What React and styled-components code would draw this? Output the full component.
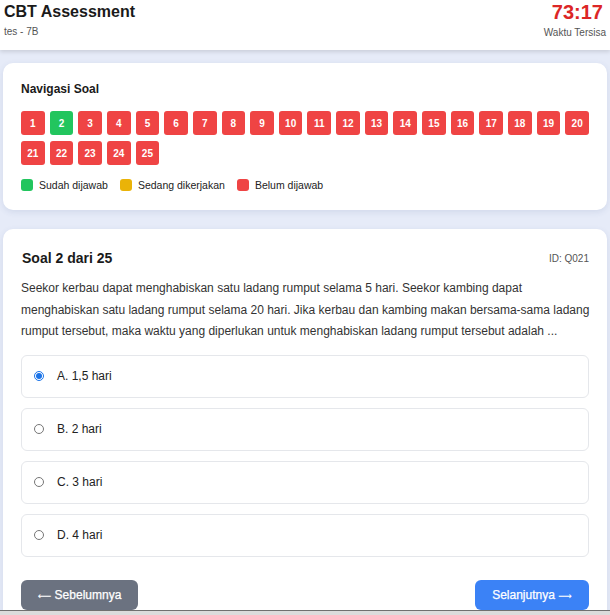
import React, { useState } from "react";
import styled, { createGlobalStyle } from "styled-components";

const GlobalStyle = createGlobalStyle`
  body {
    margin: 0;
    background: #e6ebf8;
    font-family: "Liberation Sans", Arial, sans-serif;
    color: #222;
  }
`;

const TOTAL = 25;
const CURRENT = 2;

const question = {
  id: "Q021",
  text:
    "Seekor kerbau dapat menghabiskan satu ladang rumput selama 5 hari. Seekor kambing dapat menghabiskan satu ladang rumput selama 20 hari. Jika kerbau dan kambing makan bersama-sama ladang rumput tersebut, maka waktu yang diperlukan untuk menghabiskan ladang rumput tersebut adalah ...",
  options: ["A. 1,5 hari", "B. 2 hari", "C. 3 hari", "D. 4 hari"],
};

const statusColor = {
  done: "#22c55e",
  active: "#eab308",
  todo: "#ef4444",
};

const App = () => {
  const [selected, setSelected] = useState(0);
  const answered = [2];

  return (
    <Page>
      <GlobalStyle />
      <Header>
        <div>
          <AppTitle>CBT Assessment</AppTitle>
          <SubText>tes - 7B</SubText>
        </div>
        <TimerBox>
          <Timer>73:17</Timer>
          <SubText>Waktu Tersisa</SubText>
        </TimerBox>
      </Header>

      <Main>
        <Card>
          <NavTitle>Navigasi Soal</NavTitle>
          <NumberGrid>
            {Array.from({ length: TOTAL }, (_, i) => i + 1).map((n) => (
              <NumberButton
                key={n}
                $status={answered.includes(n) ? "done" : "todo"}
              >
                {n}
              </NumberButton>
            ))}
          </NumberGrid>
          <Legend>
            <LegendItem>
              <Swatch $status="done" />
              Sudah dijawab
            </LegendItem>
            <LegendItem>
              <Swatch $status="active" />
              Sedang dikerjakan
            </LegendItem>
            <LegendItem>
              <Swatch $status="todo" />
              Belum dijawab
            </LegendItem>
          </Legend>
        </Card>

        <Card $question>
          <QuestionHead>
            <QuestionTitle>
              Soal {CURRENT} dari {TOTAL}
            </QuestionTitle>
            <QuestionId>ID: {question.id}</QuestionId>
          </QuestionHead>
          <QuestionText>{question.text}</QuestionText>
          <Options>
            {question.options.map((opt, i) => (
              <Option key={opt}>
                <Radio
                  type="radio"
                  name="answer"
                  checked={selected === i}
                  onChange={() => setSelected(i)}
                />
                {opt}
              </Option>
            ))}
          </Options>
          <Actions>
            <NavButton $variant="prev">
              <Arrow>⟵</Arrow> Sebelumnya
            </NavButton>
            <NavButton $variant="next">
              Selanjutnya <Arrow>⟶</Arrow>
            </NavButton>
          </Actions>
        </Card>
      </Main>
      <BottomEdge />
    </Page>
  );
};

const Page = styled.div`
  min-height: 100vh;
`;

const Header = styled.header`
  display: flex;
  justify-content: space-between;
  align-items: flex-start;
  height: 50px;
  box-sizing: border-box;
  padding: 2px 4px 0 4px;
  background: #fff;
  box-shadow: 0 2px 4px rgba(0, 0, 0, 0.12);
`;

const AppTitle = styled.h1`
  margin: 0;
  font-size: 16px;
  line-height: 19px;
  font-weight: 700;
  color: #1a1a1a;
`;

const SubText = styled.div`
  margin-top: 5px;
  font-size: 10px;
  color: #555;
`;

const TimerBox = styled.div`
  text-align: right;
`;

const Timer = styled.div`
  font-size: 20px;
  line-height: 20px;
  font-weight: 700;
  color: #dc2626;
  padding-right: 3px;
`;

const Main = styled.main`
  display: flex;
  flex-direction: column;
  gap: 19px;
  padding: 13px 3px 40px 3px;
`;

const Card = styled.section`
  background: #fff;
  border-radius: 10px;
  box-shadow: 0 2px 6px rgba(60, 80, 140, 0.12);
  padding: ${(p) => (p.$question ? "18px 18px 24px 18px" : "19px 18px 19px 18px")};
`;

const NavTitle = styled.h2`
  margin: 0 0 14px;
  font-size: 12px;
  line-height: 15px;
  font-weight: 700;
  color: #1a1a1a;
`;

const NumberGrid = styled.div`
  display: grid;
  grid-template-columns: repeat(20, 1fr);
  column-gap: 5px;
  row-gap: 6px;
`;

const NumberButton = styled.button`
  height: 24px;
  padding: 0;
  border: none;
  border-radius: 3px;
  background: ${(p) => statusColor[p.$status]};
  color: #fff;
  font-family: inherit;
  font-size: 10px;
  font-weight: 700;
  cursor: pointer;
`;

const Legend = styled.div`
  display: flex;
  gap: 12px;
  margin-top: 14px;
`;

const LegendItem = styled.div`
  display: flex;
  align-items: center;
  gap: 6px;
  font-size: 10.5px;
  color: #222;
`;

const Swatch = styled.span`
  width: 12px;
  height: 12px;
  border-radius: 3px;
  background: ${(p) => statusColor[p.$status]};
`;

const QuestionHead = styled.div`
  display: flex;
  justify-content: space-between;
  align-items: center;
  padding-left: 1px;
  margin-top: 2px;
`;

const QuestionTitle = styled.h3`
  margin: 0;
  font-size: 14px;
  line-height: 18px;
  font-weight: 700;
  color: #1a1a1a;
`;

const QuestionId = styled.span`
  font-size: 10px;
  color: #555;
`;

const QuestionText = styled.p`
  margin: 11px -6px 12px 0;
  font-size: 12px;
  line-height: 21.5px;
  color: #333;
`;

const Options = styled.div`
  display: flex;
  flex-direction: column;
  gap: 10px;
`;

const Option = styled.label`
  display: flex;
  align-items: center;
  gap: 13px;
  height: 43px;
  box-sizing: border-box;
  padding: 0 12px;
  border: 1px solid #e5e7eb;
  border-radius: 6px;
  font-size: 12px;
  color: #222;
  cursor: pointer;
`;

const Radio = styled.input`
  width: 10px;
  height: 10px;
  margin: 0;
  accent-color: #1a73e8;
`;

const Actions = styled.div`
  display: flex;
  justify-content: space-between;
  margin-top: 23px;
`;

const NavButton = styled.button`
  height: 30px;
  width: ${(p) => (p.$variant === "prev" ? "117px" : "114px")};
  padding: 0;
  border: none;
  border-radius: 6px;
  background: ${(p) => (p.$variant === "prev" ? "#6b7280" : "#3b82f6")};
  color: #fff;
  font-family: inherit;
  font-size: 12px;
  font-weight: 400;
  -webkit-text-stroke: 0.25px #fff;
  cursor: pointer;
`;

const Arrow = styled.span`
  font-family: "DejaVu Sans", sans-serif;
  font-size: 9.5px;
  -webkit-text-stroke: 0;
`;

const BottomEdge = styled.div`
  position: fixed;
  left: 0;
  right: 0;
  bottom: 0;
  height: 4px;
  background: #dcdcdc;
  border-top: 1px solid #707070;
`;

export default App;
